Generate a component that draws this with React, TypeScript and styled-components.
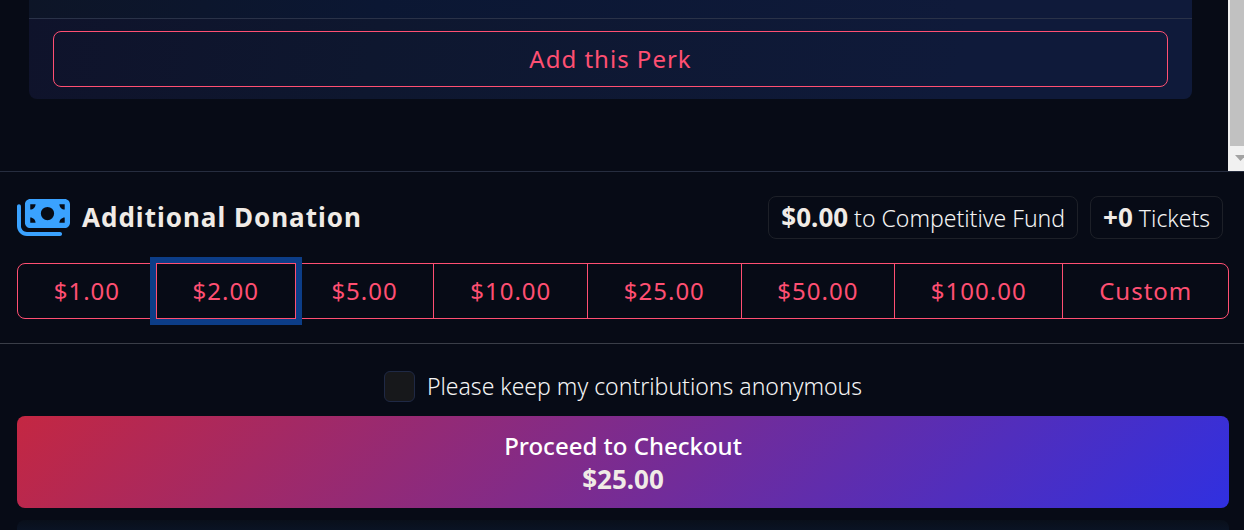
import React, { useState } from "react";
import styled, { createGlobalStyle, css } from "styled-components";
import { FaMoneyBills } from "react-icons/fa6";

const GlobalStyle = createGlobalStyle`
  * { box-sizing: border-box; }
  html { height: 100%; }
  body {
    height: 100%;
    margin: 0;
    overflow: hidden;
    background: #070b16;
    color: #f4f4f4;
    font-family: "Noto Sans", "Open Sans", sans-serif;
    font-size: 23px;
    font-weight: 300;
    line-height: 32px;
  }
`;

const Page = styled.main`
  display: flex;
  flex-direction: column;
`;

const PerkPane = styled.section`
  display: flex;
  justify-content: space-between;
`;

const PerkList = styled.div`
  flex: 1;
  padding: 0 36px 72px 29px;
`;

const PerkCard = styled.article`
  border-radius: 0 0 8px 8px;
  background: linear-gradient(100deg, #0f132b 0%, #0e172f 30%, #0f1a3a 80%);
`;

const PerkBody = styled.div`
  height: 18px;
  background: linear-gradient(100deg, #0d1527 0%, #0b1733 30%, #0f1a3a 80%);
`;

const PerkFooter = styled.footer`
  padding: 12px 24px;
  border-top: 1px solid #2a3248;
`;

const outlineText = css`
  border: 1px solid #ff4f72;
  background: transparent;
  color: #ff4f72;
  font-family: inherit;
  font-size: 24px;
  font-weight: 450;
  line-height: 36px;
  letter-spacing: 1px;
  cursor: pointer;
`;

const PerkButton = styled.button`
  ${outlineText}
  display: block;
  width: 100%;
  padding: 9px 24px;
  border-radius: 8px;
`;

const ScrollTrack = styled.div`
  display: flex;
  flex-direction: column;
  width: 16px;
  padding-left: 2px;
  overflow: hidden;
  background: #f1f1f1;
`;

const ScrollThumb = styled.div`
  flex: 1;
  background: #c1c1c1;
`;

const ScrollArrow = styled.svg`
  display: block;
  flex: none;
  width: 22px;
  height: 25px;
`;

const Donation = styled.section`
  display: flex;
  flex-direction: column;
  gap: 24px;
  padding: 24px 15px 24px 17px;
  border-top: 1px solid #262d3f;
  border-bottom: 1px solid #3a3e48;
`;

const DonationHeader = styled.header`
  display: flex;
  align-items: center;
  gap: 12px;
`;

const BillsIcon = styled(FaMoneyBills)`
  width: 53px;
  height: 43px;
  color: #3aa2ff;
`;

const Title = styled.h2`
  flex: 1;
  margin: 0;
  padding-bottom: 2px;
  color: #f0ebe6;
  font-size: 26px;
  font-weight: 700;
  line-height: 36px;
  letter-spacing: 1px;
`;

const Badges = styled.div`
  display: flex;
  gap: 12px;
  padding-right: 6px;
`;

const Badge = styled.span`
  padding: 6px 12px 4px;
  border: 1px solid #1d2028;
  border-radius: 8px;
  line-height: 31px;
`;

const Amount = styled.strong`
  color: #f0ebe6;
  font-size: 26px;
  font-weight: 700;
  line-height: 26px;
`;

const AmountGroup = styled.div`
  display: flex;
`;

const AmountButton = styled.button`
  ${outlineText}
  flex: 1 1 auto;
  padding: 9px 24px;

  & + & { margin-left: -1px; }
  &:first-child { border-radius: 8px 0 0 8px; }
  &:last-child { border-radius: 0 8px 8px 0; }
  &[aria-pressed="true"] {
    z-index: 1;
    outline: none;
    box-shadow: 0 0 0 6px #0c3d87;
  }
`;

const Checkout = styled.form`
  display: flex;
  flex-direction: column;
  padding: 27px 15px 0 17px;
`;

const Anonymous = styled.label`
  display: flex;
  align-items: center;
  align-self: center;
  gap: 12px;
  margin-bottom: 14px;
  line-height: 31px;
`;

const Tick = styled.input`
  appearance: none;
  width: 31px;
  height: 31px;
  margin: 0;
  border: 1px solid #1f2945;
  border-radius: 6px;
  background: #17181b;
  &:checked { background: #3aa2ff; }
`;

const CheckoutButton = styled.button`
  display: flex;
  flex-direction: column;
  align-items: center;
  gap: 1px;
  padding: 13px 24px 12px;
  border: 0;
  border-radius: 8px;
  background: linear-gradient(135deg, #c42742, #3030e0);
  color: #fff;
  font-family: inherit;
  font-size: 24px;
  font-weight: 500;
  line-height: 33px;
  cursor: pointer;
`;

const Total = styled.span`
  color: #f0ebe6;
  font-size: 26px;
  font-weight: 700;
`;

const NextPanel = styled.div`
  height: 10px;
  margin-top: 12px;
  border-radius: 8px 8px 0 0;
  background: linear-gradient(#090f1a, #0a1324);
`;

const amounts = ["$1.00", "$2.00", "$5.00", "$10.00", "$25.00", "$50.00", "$100.00", "Custom"];

export default function App() {
  const [selected, setSelected] = useState("$2.00");

  return (
    <Page>
      <GlobalStyle />
      <PerkPane>
        <PerkList>
          <PerkCard>
            <PerkBody />
            <PerkFooter>
              <PerkButton type="button">Add this Perk</PerkButton>
            </PerkFooter>
          </PerkCard>
        </PerkList>
        <ScrollTrack aria-hidden="true">
          <ScrollThumb />
          <ScrollArrow viewBox="0 0 22 25">
            <path d="M5 9h11l-5.500 6z" fill="#a3a3a3" />
          </ScrollArrow>
        </ScrollTrack>
      </PerkPane>
      <Donation>
        <DonationHeader>
          <BillsIcon aria-hidden="true" />
          <Title>Additional Donation</Title>
          <Badges>
            <Badge><Amount>$0.00</Amount> to Competitive Fund</Badge>
            <Badge><Amount>+0</Amount> Tickets</Badge>
          </Badges>
        </DonationHeader>
        <AmountGroup role="group" aria-label="Additional donation amount">
          {amounts.map((amount) => (
            <AmountButton
              key={amount}
              type="button"
              aria-pressed={amount === selected}
              onClick={() => setSelected(amount)}
            >
              {amount}
            </AmountButton>
          ))}
        </AmountGroup>
      </Donation>
      <Checkout onSubmit={(event) => event.preventDefault()}>
        <Anonymous>
          <Tick type="checkbox" />
          Please keep my contributions anonymous
        </Anonymous>
        <CheckoutButton type="submit">
          Proceed to Checkout
          <Total>$25.00</Total>
        </CheckoutButton>
        <NextPanel />
      </Checkout>
    </Page>
  );
}
